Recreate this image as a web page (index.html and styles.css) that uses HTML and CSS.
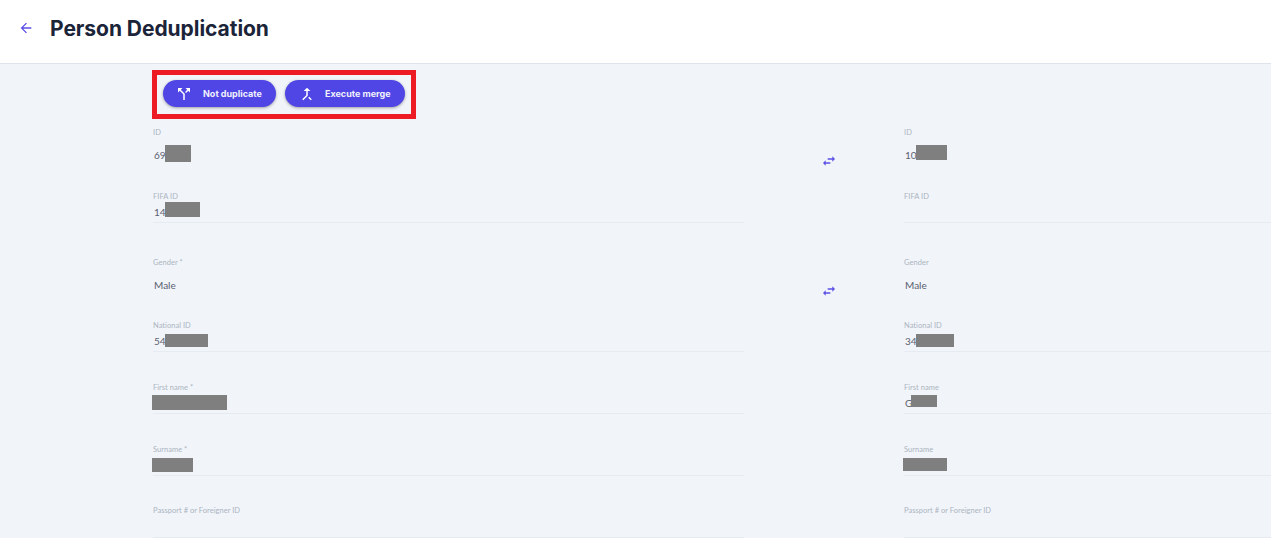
FILE: index.html
```html
<!DOCTYPE html>
<html lang="en">
<head>
    <meta charset="UTF-8">
    <meta name="viewport" content="width=device-width, initial-scale=1.0">
    <title>Person Deduplication</title>
    <link rel="stylesheet" href="styles.css">
</head>
<body>

    <header class="topbar">
        <svg class="back-icon" viewBox="0 0 24 24"><path d="M20 11H7.83l5.59-5.59L12 4l-8 8 8 8 1.41-1.41L7.83 13H20v-2z"/></svg>
        <h1>Person Deduplication</h1>
    </header>

    <main class="content">
        <div class="actions">
            <button class="action-button not-duplicate">
                <svg viewBox="0 0 24 24"><path d="M14 4l2.29 2.29-2.88 2.88 1.42 1.42 2.88-2.88L20 10V4zm-4 0H4v6l2.29-2.29 4.71 4.7V20h2v-8.41l-5.29-5.3z"/></svg>
                Not duplicate
            </button>
            <button class="action-button execute-merge">
                <svg viewBox="0 0 24 24"><path d="M17 20.41L18.41 19 15 15.59 13.59 17 17 20.41zM7.5 8H11v5.59L5.59 19 7 20.41l6-6V8h3.5L12 3.5 7.5 8z"/></svg>
                Execute merge
            </button>
        </div>

        <div class="row row-select">
            <div class="field">
                <label>ID</label>
                <div class="value">69<span class="redact r-id-left"></span></div>
            </div>
            <div class="swap"><svg viewBox="0 0 24 24"><path d="M6.99 11L3 15l3.99 4v-3H14v-2H6.99v-3zM21 9l-3.99-4v3H10v2h7.01v3L21 9z"/></svg></div>
            <div class="field">
                <label>ID</label>
                <div class="value">10<span class="redact r-id-right"></span></div>
            </div>
        </div>

        <div class="row row-input row-fifa">
            <div class="field">
                <label>FIFA ID</label>
                <div class="value">14<span class="redact r-fifa"></span></div>
            </div>
            <div></div>
            <div class="field">
                <label>FIFA ID</label>
                <div class="value"></div>
            </div>
        </div>

        <div class="row row-select row-gender">
            <div class="field">
                <label>Gender *</label>
                <div class="value">Male</div>
            </div>
            <div class="swap"><svg viewBox="0 0 24 24"><path d="M6.99 11L3 15l3.99 4v-3H14v-2H6.99v-3zM21 9l-3.99-4v3H10v2h7.01v3L21 9z"/></svg></div>
            <div class="field">
                <label>Gender</label>
                <div class="value">Male</div>
            </div>
        </div>

        <div class="row row-input">
            <div class="field">
                <label>National ID</label>
                <div class="value">54<span class="redact r-national-left"></span></div>
            </div>
            <div></div>
            <div class="field">
                <label>National ID</label>
                <div class="value">34<span class="redact r-national-right"></span></div>
            </div>
        </div>

        <div class="row row-input">
            <div class="field">
                <label>First name *</label>
                <div class="value"><span class="redact r-first-left"></span></div>
            </div>
            <div></div>
            <div class="field">
                <label>First name</label>
                <div class="value">G<span class="redact r-first-right"></span></div>
            </div>
        </div>

        <div class="row row-input row-surname">
            <div class="field">
                <label>Surname *</label>
                <div class="value"><span class="redact r-surname-left"></span></div>
            </div>
            <div></div>
            <div class="field">
                <label>Surname</label>
                <div class="value"><span class="redact r-surname-right"></span></div>
            </div>
        </div>

        <div class="row row-input row-passport">
            <div class="field">
                <label>Passport # or Foreigner ID</label>
                <div class="value"></div>
            </div>
            <div></div>
            <div class="field">
                <label>Passport # or Foreigner ID</label>
                <div class="value"></div>
            </div>
        </div>
    </main>

</body>
</html>
```

FILE: styles.css
```css
html, body {
    height: 100%;
    overflow: hidden;
}
body {
    margin: 0;
    font-family: 'Lato', sans-serif;
    background-color: #f1f4f9;
    color: #4a5060;
}

.topbar {
    display: flex;
    align-items: center;
    height: 63px;
    padding-left: 18px;
    background-color: #fff;
    border-bottom: 1px solid #dfe3ec;
}
.back-icon {
    width: 16px;
    height: 16px;
    fill: #5b4fe6;
    margin-top: -7px;
}
h1 {
    margin: -7px 0 0 16px;
    font-family: 'Inter', sans-serif;
    font-size: 21px;
    font-weight: 700;
    letter-spacing: -0.05px;
    color: #1b2438;
}

.content {
    padding-left: 153px;
    padding-top: 6px;
}

.actions {
    display: flex;
    width: fit-content;
    gap: 9px;
    margin-left: -1px;
    padding: 5px 6px 7px;
    border: 5px solid #ed1c24;
}
.action-button {
    display: flex;
    align-items: center;
    height: 27px;
    padding: 0 0 0 12px;
    border: none;
    border-radius: 14px;
    background-color: #4f46e5;
    color: #f1f1fd;
    font-family: 'Inter', sans-serif;
    font-size: 9px;
    font-weight: 700;
    white-space: nowrap;
    box-shadow: 0 1px 3px rgba(0, 0, 0, 0.35);
}
.action-button svg {
    width: 18px;
    height: 18px;
    fill: #fff;
    margin-right: 10px;
}
.not-duplicate {
    width: 113px;
}
.execute-merge {
    width: 120px;
    padding-left: 13px;
}
.execute-merge svg {
    margin-right: 9px;
}

.row {
    display: grid;
    grid-template-columns: 591px 160px 1fr;
    height: 62px;
    padding-top: 8px;
    box-sizing: border-box;
}
.row-select {
    height: 65px;
}
.row-fifa {
    height: 65px;
    padding-top: 7px;
}
.row-gender {
    height: 63px;
}
.row-surname {
    height: 61px;
}
.row-passport {
    height: 41px;
}

.field {
    min-width: 0;
}
.field label {
    display: block;
    font-size: 7.5px;
    line-height: 12px;
    color: #abb4c1;
    letter-spacing: 0.03px;
}
.value {
    display: flex;
    align-items: center;
    padding-left: 1px;
    font-size: 10px;
    color: #5a6170;
}
.row-select .value {
    height: 18px;
    margin-top: 7px;
}
.row-input .value {
    height: 21px;
    margin-top: -2px;
    border-bottom: 1px solid #e6eaf1;
}
.row-passport .value {
    height: 22px;
}

.swap {
    display: flex;
    justify-content: center;
    padding: 26px 0 0 9px;
}
.swap svg {
    width: 16px;
    height: 16px;
    fill: #5b4fe6;
}

.redact {
    display: block;
    margin-left: -1px;
    background-color: #7f7f7f;
}
.r-id-left { width: 26px; height: 17px; margin-bottom: 3px; }
.r-id-right { width: 31px; height: 15px; margin-bottom: 5px; }
.r-fifa { width: 35px; height: 15px; margin-bottom: 4px; }
.r-national-left { width: 43px; height: 13px; }
.r-national-right { width: 38px; height: 13px; margin-bottom: 1px; }
.r-first-left { width: 75px; height: 15px; margin-left: -2px; }
.r-first-right { width: 26px; height: 12px; margin-bottom: 3px; }
.r-surname-left { width: 41px; height: 14px; margin-left: -2px; }
.r-surname-right { width: 44px; height: 13px; margin-left: -2px; }
```
